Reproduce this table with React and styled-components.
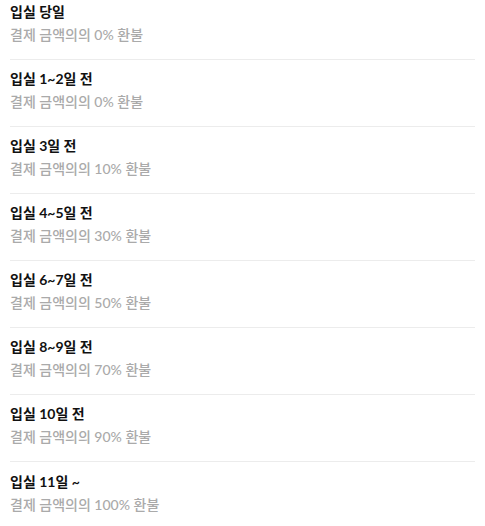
import React from "react";
import styled, { createGlobalStyle } from "styled-components";

const Global = createGlobalStyle`
  html, body { margin: 0; padding: 0; background: #fff; }
  body { font-family: Lato, "Noto Sans CJK KR", sans-serif; }
`;

const List = styled.ul`
  list-style: none;
  margin: 0;
  padding: 2px 10px 0;
`;

const Row = styled.li`
  display: flex;
  flex-direction: column;
  gap: 3px;
  padding: 9px 0 14px;
  border-bottom: 1px solid #ececec;
  &:first-child { padding-top: 0; }
  &:last-child { border-bottom: none; padding-top: 10px; }
`;

const Title = styled.div`
  font-size: 14px;
  line-height: 20px;
  font-weight: 700;
  color: #111;
`;

const Desc = styled.div`
  font-size: 14px;
  line-height: 20px;
  font-weight: 500;
  color: #aaaaaa;
`;

const items = [
  ["입실 당일", "0%"],
  ["입실 1~2일 전", "0%"],
  ["입실 3일 전", "10%"],
  ["입실 4~5일 전", "30%"],
  ["입실 6~7일 전", "50%"],
  ["입실 8~9일 전", "70%"],
  ["입실 10일 전", "90%"],
  ["입실 11일 ~", "100%"],
];

export default function App() {
  return (
    <>
      <Global />
      <List>
        {items.map(([t, p]) => (
          <Row key={t}>
            <Title>{t}</Title>
            <Desc>결제 금액의의 {p} 환불</Desc>
          </Row>
        ))}
      </List>
    </>
  );
}
